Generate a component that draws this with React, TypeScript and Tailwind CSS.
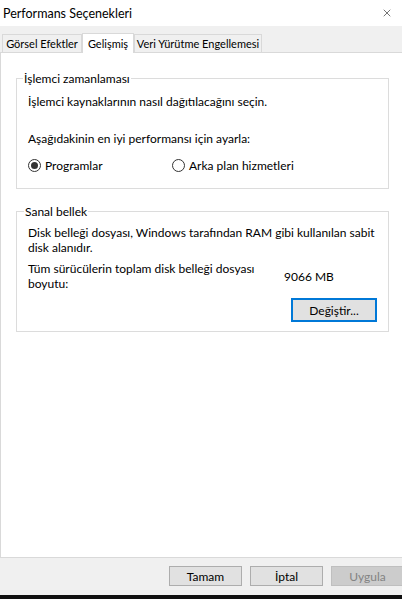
import { X } from "lucide-react";

const font = { fontFamily: 'Lato, "Segoe UI", sans-serif' };

function Radio({ checked, label }: { checked?: boolean; label: string }) {
  return (
    <label className="flex items-center gap-[4px]">
      <span className="flex h-[13px] w-[13px] items-center justify-center rounded-full border border-[#333333] bg-white">
        {checked && <span className="h-[7px] w-[7px] rounded-full bg-[#333333]" />}
      </span>
      <span>{label}</span>
    </label>
  );
}

export default function App() {
  return (
    <div
      className="flex h-[599px] w-[402px] flex-col overflow-hidden bg-[#f0f0f0] text-[12px] leading-[15px] text-black"
      style={font}
    >
      {/* title bar */}
      <div className="flex h-[26px] shrink-0 items-center justify-between bg-white pl-[3px] pr-[9px]">
        <span className="text-[12.5px]">Performans Seçenekleri</span>
        <X size={12} strokeWidth={1.1} className="text-black" />
      </div>

      {/* tabs */}
      <div className="flex h-[26px] shrink-0 items-end whitespace-nowrap pl-[2px] text-[11px]">
        <div className="flex h-[18px] w-[80px] items-center justify-center border border-b-0 border-[#d9d9d9] bg-[#f0f0f0]">
          Görsel Efektler
        </div>
        <div className="relative z-10 -mb-px flex h-[20px] w-[52px] items-center justify-center border border-b-0 border-[#d9d9d9] bg-white">
          Gelişmiş
        </div>
        <div className="flex h-[18px] w-[128px] items-center justify-center border border-b-0 border-[#d9d9d9] bg-[#f0f0f0]">
          Veri Yürütme Engellemesi
        </div>
      </div>

      {/* panel */}
      <div className="flex flex-1 flex-col items-stretch justify-start gap-[15px] border border-r-0 border-[#d9d9d9] bg-white pl-[15px] pr-[13px] pt-[18px]">
        <fieldset className="border border-[#dcdcdc] pb-[15px] pl-[6px] pr-[10px]">
          <legend className="px-[1px]">İşlemci zamanlaması</legend>
          <div className="pl-[5px]">
            <p className="mt-[8px]">İşlemci kaynaklarının nasıl dağıtılacağını seçin.</p>
            <p className="mt-[22px]">Aşağıdakinin en iyi performansı için ayarla:</p>
            <div className="mt-[12px] flex">
              <div className="w-[144px]">
                <Radio checked label="Programlar" />
              </div>
              <Radio label="Arka plan hizmetleri" />
            </div>
          </div>
        </fieldset>

        <fieldset className="border border-[#dcdcdc] pb-[9px] pl-[7px] pr-[10px]">
          <legend className="px-[1px]">Sanal bellek</legend>
          <div className="pl-[4px]">
            <p className="mt-[6px]">
              Disk belleği dosyası, Windows tarafından RAM gibi kullanılan sabit disk alanıdır.
            </p>
            <div className="mt-[6px] flex items-center">
              <p className="w-[256px]">Tüm sürücülerin toplam disk belleği dosyası boyutu:</p>
              <span>9066 MB</span>
            </div>
            <div className="mt-[7px] flex justify-end pr-[1px]">
              <button className="block h-[24px] w-[86px] border-2 border-[#0078d7] bg-[#e1e1e1]">
                Değiştir...
              </button>
            </div>
          </div>
        </fieldset>
      </div>

      {/* footer */}
      <div className="flex h-[37px] shrink-0 items-start gap-[8px] pl-[169px] pt-[8px]">
        <button className="h-[20px] w-[73px] shrink-0 border border-[#adadad] bg-[#e1e1e1]">Tamam</button>
        <button className="h-[20px] w-[73px] shrink-0 border border-[#adadad] bg-[#e1e1e1]">İptal</button>
        <button className="h-[20px] w-[73px] shrink-0 border border-[#bfbfbf] bg-[#cccccc] text-[#838383]">
          Uygula
        </button>
      </div>
      <div className="h-[4px] shrink-0 bg-[#101010]" />
    </div>
  );
}
